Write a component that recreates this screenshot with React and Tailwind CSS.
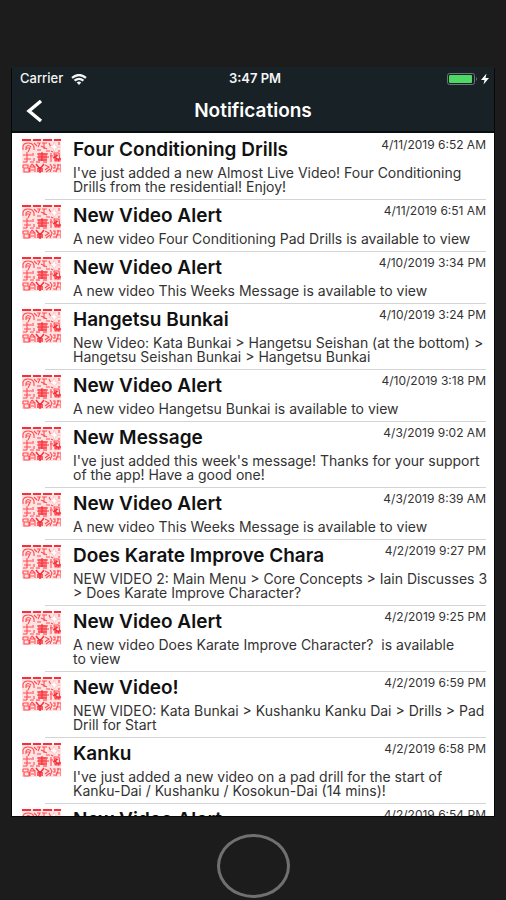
import React from "react";

const notifications = [
  { title: "Four Conditioning Drills", date: "4/11/2019 6:52 AM", lines: ["I've just added a new Almost Live Video! Four Conditioning", "Drills from the residential! Enjoy!"] },
  { title: "New Video Alert", date: "4/11/2019 6:51 AM", lines: ["A new video Four Conditioning Pad Drills is available to view"] },
  { title: "New Video Alert", date: "4/10/2019 3:34 PM", lines: ["A new video This Weeks Message is available to view"] },
  { title: "Hangetsu Bunkai", date: "4/10/2019 3:24 PM", lines: ["New Video: Kata Bunkai > Hangetsu Seishan (at the bottom) >", "Hangetsu Seishan Bunkai > Hangetsu Bunkai"] },
  { title: "New Video Alert", date: "4/10/2019 3:18 PM", lines: ["A new video Hangetsu Bunkai is available to view"] },
  { title: "New Message", date: "4/3/2019 9:02 AM", lines: ["I've just added this week's message! Thanks for your support", "of the app! Have a good one!"] },
  { title: "New Video Alert", date: "4/3/2019 8:39 AM", lines: ["A new video This Weeks Message is available to view"] },
  { title: "Does Karate Improve Chara", date: "4/2/2019 9:27 PM", lines: ["NEW VIDEO 2: Main Menu > Core Concepts > Iain Discusses 3", "> Does Karate Improve Character?"] },
  { title: "New Video Alert", date: "4/2/2019 9:25 PM", lines: ["A new video Does Karate Improve Character?  is available", "to view"] },
  { title: "New Video!", date: "4/2/2019 6:59 PM", lines: ["NEW VIDEO: Kata Bunkai > Kushanku Kanku Dai > Drills > Pad", "Drill for Start"] },
  { title: "Kanku", date: "4/2/2019 6:58 PM", lines: ["I've just added a new video on a pad drill for the start of", "Kanku-Dai / Kushanku / Kosokun-Dai (14 mins)!"] },
  { title: "New Video Alert", date: "4/2/2019 6:54 PM", lines: ["A new video Kanku is available to view"] },
];

function Seal() {
  return (
    <svg viewBox="0 0 39 34" className="h-[34px] w-[39px]" fill="none" stroke="#ff4a50" strokeWidth="1.1" aria-hidden="true">
      <rect x="0" y="0" width="39" height="34" fill="#ffe3e3" stroke="none" />
      <path d="M0 1h9M11 1h8M21 1h9M32 1h7" stroke="#f5303a" strokeWidth="1.8" />
      <path d="M1 11V7q1-3 5-3 5 0 6 4v3M4 11V8q2-3 5 0M4 9h4l-2 4" />
      <path d="M12 4l3 3M15 4h3l-2 4M20 4h5M22 4v6M15 11h4M19 7l6 3M24 12h4M27 4l2 4" />
      <path d="M32 3l2 4 4 1-4 1-2 4-1-4-4-1 4-2z" fill="#fff" stroke="#ffb0b3" strokeWidth="0.6" />
      <path d="M37 3v3M37 11v2M29 12l2 1" />
      <path d="M1 16h9M5 13v10M2 20h7M1 23h4M8 23h4M11 14v3M12 19v3" />
      <rect x="16" y="14" width="9" height="8" rx="1" fill="#ff7b80" stroke="none" />
      <path d="M15 15h11M15 18h12M16 21h9M14 23h4M21 23h4M20 13v9" stroke="#f8323b" strokeWidth="1.2" />
      <path d="M29 14v9M28 17h3M32 14h5l1 8h-5z" />
      <path d="M31 19l5-3M32 17l5 5M34 15v7M35 20h4" stroke="#f8323b" strokeWidth="1.4" />
      <path d="M1 26h5v3H2v4h5v-4M1 26v3M10 25l-2 3v5M10 25l3 3v5M9 28h4M9 31h3" />
      <path d="M14 25l4 5 4-5M18 28v6M15 30h6M15 32h6" stroke="#f5303a" strokeWidth="1.5" />
      <path d="M23 26l4 2-4 3M24 33l4-3M28 25l2 3-2 5M31 26h2v3h-2M31 32h3M36 25v3l-2 5M35 26h4v7M34 30h4" />
    </svg>
  );
}

function StatusBar() {
  return (
    <div className="grid h-6 grid-cols-3 items-center pl-2 pr-1 text-[13px] font-medium text-[#f4f6f6]">
      <div className="flex items-center gap-2">
        <span>Carrier</span>
        <svg viewBox="0 0 16 11" className="h-[11px] w-4" fill="none" stroke="#f4f6f6" strokeWidth="2.2" aria-hidden="true">
          <path d="M1 3.8Q8-1.8 15 3.8" />
          <path d="M3.5 6.6Q8 3 12.5 6.6" />
          <path d="M5.7 8.4Q8 6.6 10.3 8.4L8 11z" fill="#f4f6f6" stroke="none" />
        </svg>
      </div>
      <div className="text-center font-semibold">3:47 PM</div>
      <div className="flex justify-end">
        <svg viewBox="0 0 43 12" className="h-3 w-[43px]" aria-hidden="true">
          <rect x="0.5" y="0.5" width="27" height="11" rx="2" fill="none" stroke="#6d7678" />
          <rect x="2" y="2" width="23" height="8" rx="1" fill="#4cd964" />
          <path d="M29 4q2 2 0 4z" fill="#6d7678" />
          <path d="M39.500 0.500L34 7h3.500L36.500 11.500L42 5h-3.500z" fill="#fff" />
        </svg>
      </div>
    </div>
  );
}

function Notification({ title, date, lines }) {
  return (
    <li className="flex pl-[10px] pr-2">
      <div className="pt-[5px]">
        <Seal />
      </div>
      <div className="-ml-4 min-w-0 flex-1 border-b border-[#d4d4d4] pb-[5px] pl-7">
        <div className="flex items-start justify-between">
          <h2 className="pt-[5px] text-[19px] font-semibold leading-[22px] text-[#111]">{title}</h2>
          <time className="whitespace-nowrap pt-1 text-xs leading-[14px] text-[#333]">{date}</time>
        </div>
        <p className="whitespace-pre pt-[5px] text-sm leading-[14px] text-[#333]">{lines.join("\n")}</p>
      </div>
    </li>
  );
}

export default function App() {
  return (
    <div className="flex h-screen flex-col bg-[#1c1c1c] px-3 pt-[67px] font-['Inter','Liberation_Sans',sans-serif]">
      <main className="flex min-h-0 flex-1 flex-col bg-white shadow-[1px_1px_0_#080808,-1px_1px_0_#080808]">
        <header className="bg-[#172126]">
          <StatusBar />
          <div className="grid h-[42px] grid-cols-[48px_1fr_48px] items-center border-b-2 border-[#080d0f]">
            <button type="button" aria-label="Back" className="flex h-full items-center pl-[14px]">
              <svg viewBox="0 0 17 22" className="h-[22px] w-[17px]" fill="none" stroke="#fff" strokeWidth="3.4" aria-hidden="true">
                <path d="M15 1L3 11l12 10" />
              </svg>
            </button>
            <h1 className="text-center text-[19px] font-semibold text-white">Notifications</h1>
          </div>
        </header>
        <ul className="min-h-0 flex-1 overflow-hidden pt-px">
          {notifications.map((item, index) => (
            <Notification key={index} {...item} />
          ))}
        </ul>
      </main>
      <footer className="flex h-[84px] shrink-0 items-end justify-center pb-[2px]">
        <button type="button" aria-label="Home" className="h-16 w-[73px] rounded-[50%] border-[3px] border-[#707070]" />
      </footer>
    </div>
  );
}
